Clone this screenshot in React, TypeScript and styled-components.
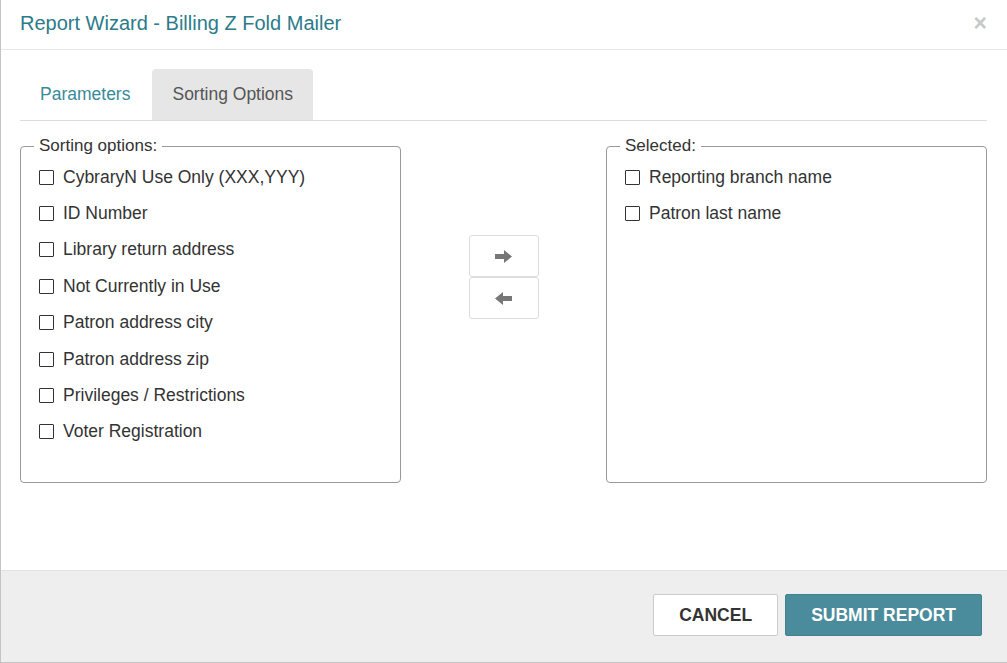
import React from 'react';
import styled, { createGlobalStyle } from 'styled-components';

const GlobalStyle = createGlobalStyle`
  html, body {
    margin: 0;
    padding: 0;
    background: #ffffff;
  }
  body {
    font-family: "Liberation Sans", Arial, sans-serif;
    color: #333333;
  }
`;

const Modal = styled.div`
  width: 1007px;
  height: 663px;
  box-sizing: border-box;
  border-left: 1px solid #c4c4c4;
  border-bottom: 1px solid #c4c4c4;
  display: flex;
  flex-direction: column;
  background: #ffffff;
`;

const Header = styled.div`
  height: 50px;
  box-sizing: border-box;
  border-bottom: 1px solid #e8e8e8;
  display: flex;
  align-items: center;
  justify-content: space-between;
  padding: 0 20px 3px 19px;
`;

const Title = styled.h4`
  margin: 0;
  font-size: 20px;
  font-weight: normal;
  color: #2b7b8b;
`;

const Close = styled.button`
  border: 0;
  background: none;
  padding: 0;
  font-family: "Liberation Sans", Arial, sans-serif;
  font-size: 23px;
  font-weight: bold;
  color: #c8c8c8;
  line-height: 1;
  cursor: pointer;
`;

const Body = styled.div`
  flex: 1;
  padding: 19px 20px 0 19px;
`;

const TabList = styled.div`
  display: flex;
  border-bottom: 1px solid #dddddd;
`;

const Tab = styled.div<{ $active?: boolean }>`
  height: 51px;
  box-sizing: border-box;
  padding: 0 20px;
  margin-right: 2px;
  display: flex;
  align-items: center;
  font-size: 17.5px;
  border-radius: 4px 4px 0 0;
  color: ${(p) => (p.$active ? '#555555' : '#3a8a9a')};
  background: ${(p) => (p.$active ? '#e6e6e6' : 'transparent')};
  cursor: pointer;
`;

const Columns = styled.div`
  display: grid;
  grid-template-columns: 381px 1fr 381px;
  margin-top: 15px;
`;

const Box = styled.fieldset`
  margin: 0;
  padding: 3px 13px 0 13px;
  height: 347px;
  box-sizing: border-box;
  border: 1px solid #999999;
  border-radius: 4px;
`;

const Legend = styled.legend`
  padding: 0 5px;
  font-size: 17px;
  color: #333333;
`;

const Row = styled.label`
  display: flex;
  align-items: center;
  height: 36.4px;
  padding-left: 5px;
  font-size: 17.5px;
  color: #333333;
  cursor: pointer;
`;

const Check = styled.input`
  appearance: none;
  margin: 0 9px 0 0;
  width: 15px;
  height: 15px;
  box-sizing: border-box;
  border: 1px solid #333333;
  border-radius: 1px;
  background: #ffffff;
  flex: none;
`;

const Mover = styled.div`
  display: flex;
  flex-direction: column;
  align-items: center;
  padding-top: 99px;
`;

const MoveButton = styled.button`
  width: 70px;
  height: 42px;
  box-sizing: border-box;
  border: 1px solid #dddddd;
  border-radius: 3px;
  background: #ffffff;
  display: flex;
  align-items: center;
  justify-content: center;
  padding: 0;
  cursor: pointer;
`;

const Footer = styled.div`
  height: 92px;
  box-sizing: border-box;
  background: #eeeeee;
  border-top: 1px solid #e2e2e2;
  display: flex;
  justify-content: flex-end;
  align-items: flex-start;
  gap: 7px;
  padding: 23px 25px 0 0;
`;

const Button = styled.button<{ $primary?: boolean }>`
  height: 42px;
  padding: 0 25px;
  box-sizing: border-box;
  border-radius: 2px;
  font-family: "Liberation Sans", Arial, sans-serif;
  font-size: 17.5px;
  font-weight: bold;
  text-transform: uppercase;
  cursor: pointer;
  border: 1px solid ${(p) => (p.$primary ? '#3f8391' : '#cccccc')};
  background: ${(p) => (p.$primary ? '#4a8c9b' : '#ffffff')};
  color: ${(p) => (p.$primary ? '#ffffff' : '#333333')};
`;

const Arrow = ({ dir }: { dir: 'right' | 'left' }) => (
  <svg width="17" height="13" viewBox="0 0 17 13" style={dir === 'left' ? { transform: 'scaleX(-1)' } : undefined}>
    <polygon points="0,4 9,4 9,0 17,6.5 9,13 9,9 0,9" fill="#777777" />
  </svg>
);

const available = [
  'CybraryN Use Only (XXX,YYY)',
  'ID Number',
  'Library return address',
  'Not Currently in Use',
  'Patron address city',
  'Patron address zip',
  'Privileges / Restrictions',
  'Voter Registration',
];

const selected = ['Reporting branch name', 'Patron last name'];

export default function App() {
  return (
    <>
      <GlobalStyle />
      <Modal>
        <Header>
          <Title>Report Wizard - Billing Z Fold Mailer</Title>
          <Close aria-label="Close">×</Close>
        </Header>
        <Body>
          <TabList>
            <Tab>Parameters</Tab>
            <Tab $active>Sorting Options</Tab>
          </TabList>
          <Columns>
            <Box>
              <Legend>Sorting options:</Legend>
              {available.map((item) => (
                <Row key={item}>
                  <Check type="checkbox" />
                  {item}
                </Row>
              ))}
            </Box>
            <Mover>
              <MoveButton aria-label="Add">
                <Arrow dir="right" />
              </MoveButton>
              <MoveButton aria-label="Remove">
                <Arrow dir="left" />
              </MoveButton>
            </Mover>
            <Box>
              <Legend>Selected:</Legend>
              {selected.map((item) => (
                <Row key={item}>
                  <Check type="checkbox" />
                  {item}
                </Row>
              ))}
            </Box>
          </Columns>
        </Body>
        <Footer>
          <Button>Cancel</Button>
          <Button $primary>Submit Report</Button>
        </Footer>
      </Modal>
    </>
  );
}
